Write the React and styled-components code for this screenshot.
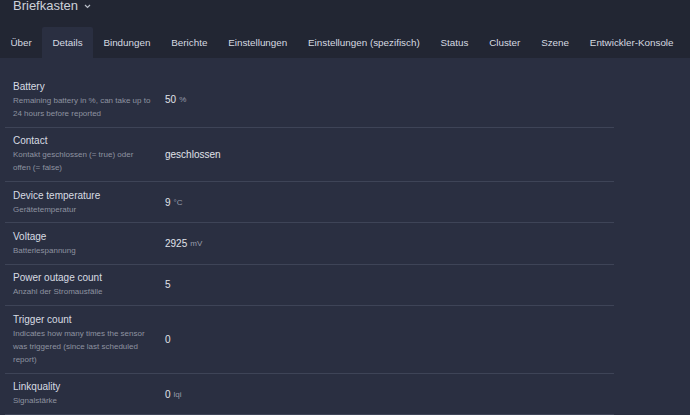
import styled, { createGlobalStyle } from 'styled-components';

const GlobalStyle = createGlobalStyle`
  html, body {
    margin: 0;
    padding: 0;
    background: #2a2f41;
    font-family: "Liberation Sans", Arial, sans-serif;
    overflow: hidden;
  }
`;

const tabs = [
  'Über',
  'Details',
  'Bindungen',
  'Berichte',
  'Einstellungen',
  'Einstellungen (spezifisch)',
  'Status',
  'Cluster',
  'Szene',
  'Entwickler-Konsole',
];

const rows = [
  {
    name: 'Battery',
    desc: 'Remaining battery in %, can take up to 24 hours before reported',
    value: '50',
    unit: '%',
  },
  {
    name: 'Contact',
    desc: 'Kontakt geschlossen (= true) oder offen (= false)',
    value: 'geschlossen',
  },
  { name: 'Device temperature', desc: 'Gerätetemperatur', value: '9', unit: '°C' },
  { name: 'Voltage', desc: 'Batteriespannung', value: '2925', unit: 'mV' },
  { name: 'Power outage count', desc: 'Anzahl der Stromausfälle', value: '5' },
  {
    name: 'Trigger count',
    desc: 'Indicates how many times the sensor was triggered (since last scheduled report)',
    value: '0',
  },
  { name: 'Linkquality', desc: 'Signalstärke', value: '0', unit: 'lqi' },
];

export default function App() {
  return (
    <>
      <GlobalStyle />
      <Header>
        <Title>
          Briefkasten
          <svg width='7' height='5' viewBox='0 0 7 5'>
            <path d='M1 1l2.5 2.5L6 1' fill='none' stroke='#b9bec8' strokeWidth='1.2' />
          </svg>
        </Title>
        <TabBar>
          {tabs.map((t) => (
            <Tab key={t} $active={t === 'Details'}>
              {t}
            </Tab>
          ))}
        </TabBar>
      </Header>
      <Content>
        <Table>
          {rows.map((r) => (
            <Row key={r.name}>
              <NameCell>
                <Name>{r.name}</Name>
                <Desc>{r.desc}</Desc>
              </NameCell>
              <ValueCell>
                {r.value}
                {r.unit && <Unit>{r.unit}</Unit>}
              </ValueCell>
            </Row>
          ))}
        </Table>
      </Content>
    </>
  );
}

const Header = styled.header`
  background-color: #222633;
`;

const Title = styled.div`
  display: flex;
  align-items: flex-start;
  gap: 6px;
  height: 27px;
  padding-left: 13px;
  font-size: 13px;
  line-height: 12px;
  color: #cdd1d9;

  svg {
    margin-top: 4px;
  }
`;

const TabBar = styled.nav`
  display: flex;
  height: 31px;
`;

const Tab = styled.div`
  display: flex;
  align-items: center;
  padding: 0 10.4px;
  font-size: 9.85px;
  color: #d6dae1;
  white-space: nowrap;
  background-color: ${(p) => (p.$active ? '#2a2f41' : 'transparent')};
  border-radius: 2px 2px 0 0;
`;

const Content = styled.main`
  padding: 15px 0 0 5px;
`;

const Table = styled.div`
  width: 609px;
`;

const Row = styled.div`
  display: grid;
  grid-template-columns: 152px 1fr;
  border-bottom: 1px solid #3e4457;
`;

const NameCell = styled.div`
  padding: 6.5px 4px 6.5px 8px;
`;

const Name = styled.div`
  font-size: 10px;
  line-height: 14px;
  color: #d8dce3;
`;

const Desc = styled.div`
  font-size: 8px;
  line-height: 13.3px;
  color: #8e93a0;
`;

const ValueCell = styled.div`
  display: flex;
  align-items: center;
  gap: 3px;
  padding-left: 8px;
  font-size: 10px;
  color: #e0e3ea;
`;

const Unit = styled.span`
  font-size: 8px;
  color: #989dab;
`;
